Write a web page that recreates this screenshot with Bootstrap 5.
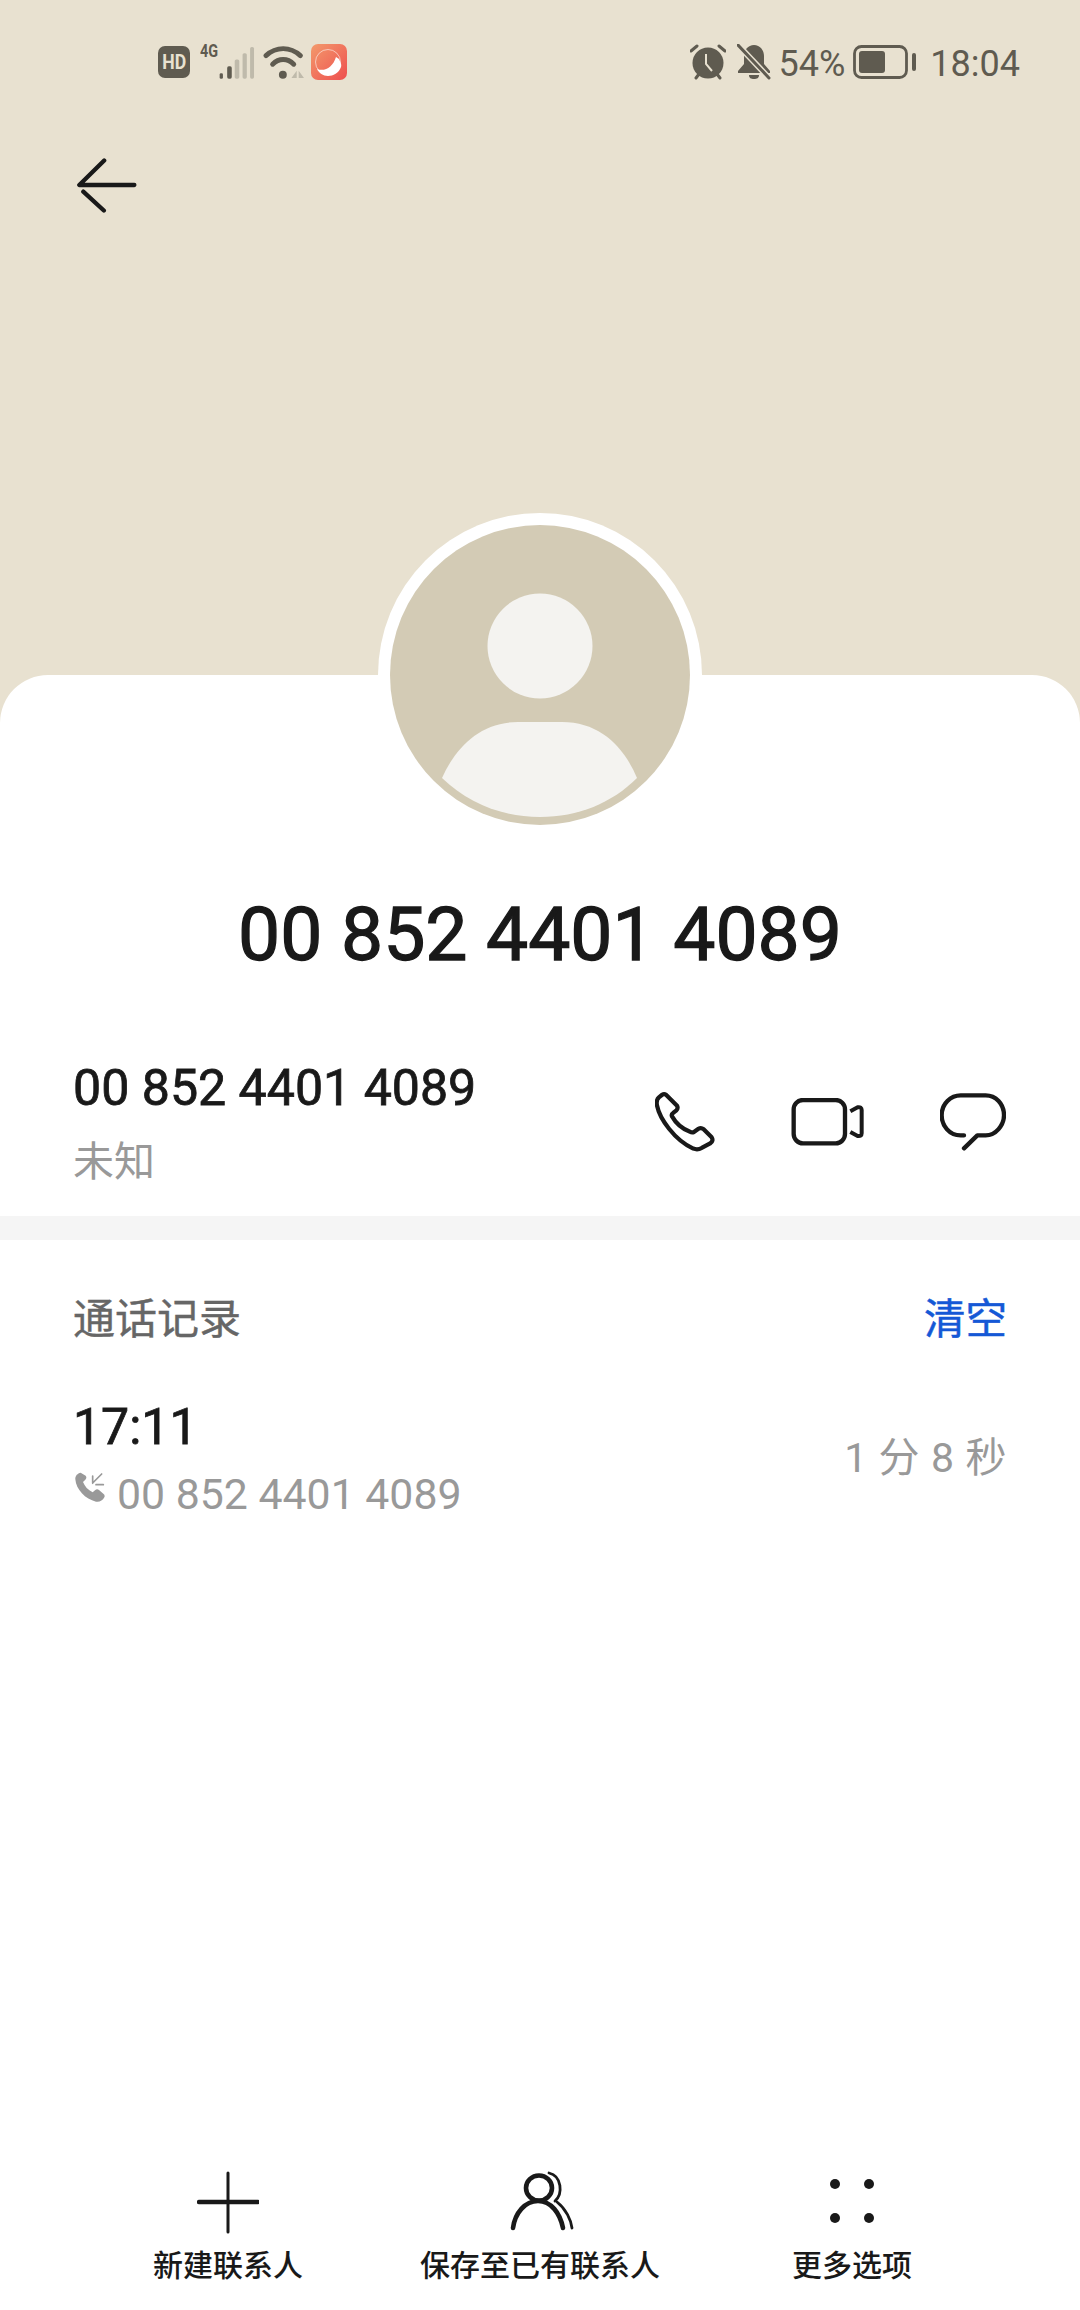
<!doctype html>
<html lang="zh-CN">
<head>
<meta charset="utf-8">
<title>通话详情</title>
<link href="https://cdn.jsdelivr.net/npm/bootstrap@5.3.0/dist/css/bootstrap.min.css" rel="stylesheet">
<style>
  body { background:#fff; font-family:Roboto,"Noto Sans CJK SC",sans-serif; color:#191919; }
  .phone-screen { width:1080px; height:2310px; overflow:hidden; background:#e8e1d0; }
  .hero { height:675px; }
  .status-row { height:124px; padding:0 60px 0 158px; color:#5f5b50; font-size:36px; line-height:1; }
  .status-row svg { display:block; }
  .status-txt { padding-top:4px; }
  .hd-chip { width:32px; height:32px; border-radius:7px; background:#5f5b50; color:#e8e1d0; font:700 21px/32px Roboto,sans-serif; text-align:center; }
  .hd-chip span { display:inline-block; transform:scaleX(.84); }
  .net-wrap { position:relative; width:56px; height:36px; margin-left:9px; }
  .net-label { position:absolute; left:1px; top:-3px; font:700 18px/20px Roboto,sans-serif; transform:scaleX(.8); transform-origin:left top; }
  .net-wrap svg { position:absolute; right:0; top:1px; }
  .wifi-ico { margin-left:8px; }
  .app-ico { margin-left:5px; }
  .gap-bell { margin-left:11px; }
  .gap-time { margin-left:14px; }
  .back-btn { margin:34px 0 0 76px; width:63px; height:55px; padding:0; border:0; background:none; display:block; }
  .sheet { flex:1 1 auto; background:#fff; border-radius:48px 48px 0 0; min-height:0; }
  .portrait { width:324px; height:324px; margin:-162px auto 0; border-radius:50%; background:#fff; padding:12px; }
  .portrait svg { display:block; }
  .title-num { margin:47px 0 0; font-size:75px; line-height:100px; font-weight:400; text-align:center; -webkit-text-stroke:1.3px #191919; }
  .info-row { height:232px; padding:74px 74px 0 73px; }
  .info-num { font-size:50.1px; line-height:60px; font-weight:400; -webkit-text-stroke:.8px #191919; }
  .info-tag { font-size:41px; line-height:60px; margin-top:14px; color:#999; }
  .action-set { width:351px; height:64px; margin-top:32px; }
  .rule-band { height:24px; background:#f5f5f5; }
  .log-sec { padding:50px 73px 0 73px; }
  .sec-title { font-size:42px; line-height:60px; color:#666; font-weight:400; -webkit-text-stroke:.4px #666; }
  .sec-clear { font-size:41.5px; line-height:60px; color:#1558d6; font-weight:400; -webkit-text-stroke:.5px #1558d6; }
  .log-item { margin-top:47px; }
  .log-time { font-size:50px; line-height:60px; font-weight:400; -webkit-text-stroke:.8px #191919; }
  .log-sub { font-size:42.8px; line-height:60px; margin-top:7px; color:#999; }
  .log-sub svg { margin:-22px 12px 0 2px; }
  .log-dur { font-size:41px; line-height:60px; color:#999; margin-top:-5px; letter-spacing:.6px; }
  .tool-bar { padding:0 72px 24px; }
  .tool-cell { width:312px; }
  .tool-ico { height:67px; }
  .tool-txt { font-size:30px; line-height:40px; margin-top:11px; font-weight:500; white-space:nowrap; }
</style>
</head>
<body>
<div class="phone-screen d-flex flex-column">

  <header class="hero flex-shrink-0">
    <div class="status-row d-flex align-items-center justify-content-between">
      <div class="d-flex align-items-center">
        <div class="hd-chip"><span>HD</span></div>
        <div class="net-wrap">
          <span class="net-label">4G</span>
          <svg width="36" height="35" viewBox="265 70 110 105">
            <rect x="267" y="155" width="10" height="17" rx="4" fill="#5f5b50"/>
            <rect x="290" y="134" width="14" height="38" rx="5" fill="#5f5b50"/>
            <rect x="313" y="113" width="14" height="59" rx="5" fill="#bfbaab"/>
            <rect x="337" y="94" width="13" height="78" rx="5" fill="#bfbaab"/>
            <rect x="360" y="75" width="12" height="97" rx="5" fill="#bfbaab"/>
          </svg>
        </div>
        <svg class="wifi-ico" width="43" height="33" viewBox="400 75 130 100">
          <path d="M409 104C440 76 482 76 513 104" fill="none" stroke="#5f5b50" stroke-width="15" stroke-linecap="round"/>
          <path d="M429 130C448 111 474 111 493 130" fill="none" stroke="#5f5b50" stroke-width="15" stroke-linecap="round"/>
          <circle cx="460" cy="162" r="12" fill="#5f5b50"/>
          <path d="M502 150v22h-16zM508 150v22h16z" fill="#bfbaab"/>
        </svg>
        <svg class="app-ico" width="36" height="36" viewBox="0 0 36 36">
          <defs><linearGradient id="appTone" x1="0" y1="0" x2="1" y2="1"><stop offset="0" stop-color="#f39a6c"/><stop offset="1" stop-color="#ee4f4f"/></linearGradient></defs>
          <rect width="36" height="36" rx="7" fill="url(#appTone)"/>
          <circle cx="17" cy="18" r="12.5" fill="none" stroke="#fff" stroke-opacity=".55" stroke-width="1"/>
          <path d="M6 25C14 28 22 23 25 13l3 2c1 3 3 5 2 8-2 6-8 9-13 9-5 0-9-3-11-7z" fill="#fff"/>
        </svg>
      </div>
      <div class="d-flex align-items-center">
        <svg width="36" height="36" viewBox="0 0 36 36">
          <circle cx="18" cy="19" r="15.5" fill="#5f5b50"/>
          <path d="M16 10v10l6 7" fill="none" stroke="#e8e1d0" stroke-width="2"/>
          <path d="M1 7l6-5M35 7l-6-5M6 34l3-4M30 34l-3-4" stroke="#5f5b50" stroke-width="3" stroke-linecap="round"/>
        </svg>
        <svg class="gap-bell" width="34" height="36" viewBox="0 0 34 36">
          <path d="M17 1c6 0 10 5 10 11v8l6 7v2H1v-2l6-7v-8C7 6 11 1 17 1zM12 31h10c0 3-2 4-5 4s-5-1-5-4z" fill="#5f5b50"/>
          <path d="M1 1l31 33" stroke="#e8e1d0" stroke-width="6"/>
          <path d="M1 1l31 33" stroke="#5f5b50" stroke-width="3" stroke-linecap="round"/>
        </svg>
        <span class="ms-2 status-txt">54%</span>
        <svg class="ms-2" width="63" height="34" viewBox="0 0 63 34">
          <rect x="1.5" y="1.5" width="52" height="31" rx="7" fill="none" stroke="#5f5b50" stroke-width="2.8"/>
          <rect x="6" y="6" width="26" height="22" rx="3" fill="#5f5b50"/>
          <rect x="59" y="8" width="4" height="18" rx="2" fill="#5f5b50"/>
        </svg>
        <span class="gap-time status-txt">18:04</span>
      </div>
    </div>
    <button class="back-btn" type="button" aria-label="返回">
      <svg width="63" height="55" viewBox="50 85 190 165">
        <path d="M135 92L60 166H226M72 186L134 243" fill="none" stroke="#191919" stroke-width="13" stroke-linecap="round" stroke-linejoin="round"/>
      </svg>
    </button>
  </header>

  <main class="sheet d-flex flex-column">
    <div class="portrait flex-shrink-0">
      <svg width="300" height="300" viewBox="0 0 300 300">
        <circle cx="150" cy="150" r="150" fill="#d3cbb5"/>
        <circle cx="150" cy="121" r="52.5" fill="#f4f3f0"/>
        <path d="M52 253C66 222 90 197 128 197H172C210 197 234 222 247 253 C222 278 188 292 150 292 C112 292 78 278 52 253Z" fill="#f4f3f0"/>
      </svg>
    </div>

    <h1 class="title-num">00 852 4401 4089</h1>

    <section class="info-row d-flex justify-content-between flex-shrink-0">
      <div>
        <div class="info-num">00 852 4401 4089</div>
        <div class="info-tag">未知</div>
      </div>
      <div class="action-set d-flex justify-content-between align-items-center">
        <svg width="60" height="62" viewBox="70 55 185 190">
          <path d="M104 66q-6-4-12 0l-10 8q-9 8-6 24C84 140 130 205 188 232q14 5 26-2l26-14q12-8 4-20l-24-24q-8-6-16-1l-14 10q-6 3-12-1C150 170 135 155 122 132q-2-6 4-10l10-8q6-6 2-14z" fill="none" stroke="#191919" stroke-width="13" stroke-linejoin="round"/>
        </svg>
        <svg width="74" height="48" viewBox="486 78 218 144">
          <rect x="492" y="84" width="154" height="130" rx="28" fill="none" stroke="#191919" stroke-width="13"/>
          <path d="M662 118L684 106q12-2 12 8v70q0 10-12 8L662 180" fill="none" stroke="#191919" stroke-width="12" stroke-linejoin="round"/>
        </svg>
        <svg width="66" height="58" viewBox="928 68 198 174">
          <path d="M1000 195H990C955 195 933 165 933 135C933 100 960 75 990 75H1065C1095 75 1120 100 1120 135C1120 165 1095 195 1065 195H1040L1000 234" fill="none" stroke="#191919" stroke-width="13" stroke-linecap="round" stroke-linejoin="round"/>
        </svg>
      </div>
    </section>

    <div class="rule-band flex-shrink-0"></div>

    <section class="log-sec">
      <div class="d-flex justify-content-between">
        <span class="sec-title">通话记录</span>
        <span class="sec-clear">清空</span>
      </div>
      <div class="log-item d-flex justify-content-between align-items-center">
        <div>
          <div class="log-time">17:11</div>
          <div class="log-sub">
            <svg width="30" height="30" viewBox="45 228 90 90">
              <path d="M62 230c-10 2-17 10-16 20 2 30 30 60 62 67 10 2 20-3 25-13 2-4 1-8-3-11l-13-11c-4-3-8-3-12 1l-7 6c-14-7-24-18-29-31l7-7c4-4 4-8 1-12z" fill="#999"/>
              <path d="M125 234L98 261M98 240V262M108 266h22" fill="none" stroke="#999" stroke-width="5" stroke-linecap="round"/>
            </svg>00 852 4401 4089
          </div>
        </div>
        <div class="log-dur">1 分 8 秒</div>
      </div>
    </section>

    <nav class="tool-bar d-flex mt-auto">
      <div class="tool-cell d-flex flex-column align-items-center">
        <svg class="tool-ico" width="62" height="67" viewBox="0 0 62 67">
          <path d="M31 5V64" stroke="#191919" stroke-width="3" stroke-linecap="round"/>
          <path d="M2 34H61" stroke="#191919" stroke-width="4.5" stroke-linecap="round"/>
        </svg>
        <div class="tool-txt">新建联系人</div>
      </div>
      <div class="tool-cell d-flex flex-column align-items-center">
        <svg class="tool-ico" width="75" height="67" viewBox="0 0 75 67">
          <ellipse cx="36" cy="20" rx="13" ry="12.5" fill="none" stroke="#191919" stroke-width="4.6"/>
          <path d="M10 60C12 45 22 33 35 33C48 33 57 45 60 60" fill="none" stroke="#191919" stroke-width="4.6" stroke-linecap="round"/>
          <path d="M46 5C59 8 60 26 52 33M54 34C63 41 68 52 69 60" fill="none" stroke="#191919" stroke-width="2.8" stroke-linecap="round"/>
        </svg>
        <div class="tool-txt">保存至已有联系人</div>
      </div>
      <div class="tool-cell d-flex flex-column align-items-center">
        <svg class="tool-ico" width="50" height="67" viewBox="0 0 50 67">
          <circle cx="8" cy="16" r="5" fill="#191919"/>
          <circle cx="42" cy="16" r="5" fill="#191919"/>
          <circle cx="8" cy="50" r="5" fill="#191919"/>
          <circle cx="42" cy="50" r="5" fill="#191919"/>
        </svg>
        <div class="tool-txt">更多选项</div>
      </div>
    </nav>
  </main>
</div>
<script src="https://cdn.jsdelivr.net/npm/bootstrap@5.3.0/dist/js/bootstrap.bundle.min.js"></script>
</body>
</html>
